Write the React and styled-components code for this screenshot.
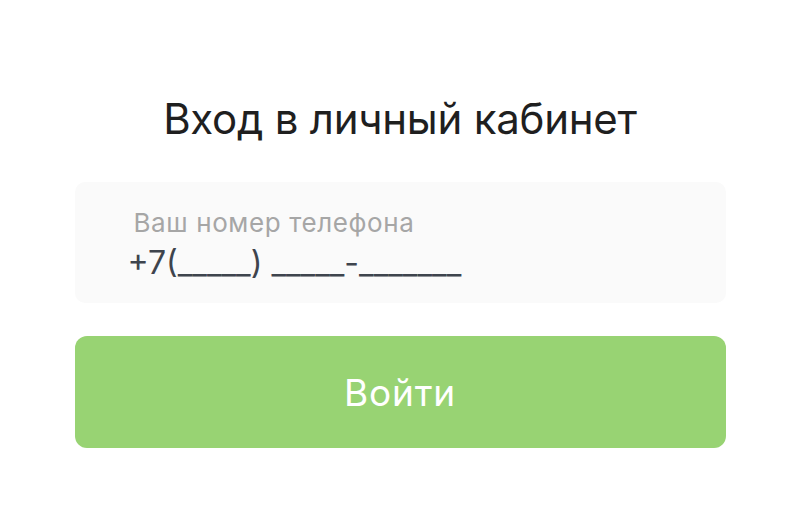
import React from "react";
import styled, { createGlobalStyle } from "styled-components";

const GlobalStyle = createGlobalStyle`
  html, body {
    margin: 0;
    padding: 0;
    background: #ffffff;
    font-family: Inter, "Noto Sans", sans-serif;
  }
`;

const Page = styled.div`
  width: 800px;
  height: 528px;
  display: flex;
  justify-content: center;
`;

const Form = styled.form`
  width: 651px;
  padding-top: 91px;
  display: flex;
  flex-direction: column;
`;

const Title = styled.h1`
  margin: 0 0 35px;
  text-align: center;
  font-size: 42px;
  font-weight: 400;
  line-height: 56px;
  letter-spacing: -0.25px;
  color: #1f1f1f;
`;

const Field = styled.label`
  height: 121px;
  box-sizing: border-box;
  padding: 25px 0 0 53px;
  background: #fafafa;
  border-radius: 10px;
  display: flex;
  flex-direction: column;
`;

const Caption = styled.span`
  margin-left: 6px;
  font-size: 26px;
  line-height: 32px;
  letter-spacing: 0.6px;
  color: #a6a6a6;
`;

const Phone = styled.input`
  margin-top: 4px;
  border: none;
  background: transparent;
  padding: 0;
  outline: none;
  font-family: inherit;
  font-size: 32px;
  line-height: 40px;
  height: 40px;
  color: #3e444d;
  &::placeholder {
    color: #3e444d;
    opacity: 1;
  }
`;

const Submit = styled.button`
  margin-top: 33px;
  height: 112px;
  border: none;
  border-radius: 12px;
  background: #98d373;
  color: #ffffff;
  font-family: inherit;
  font-size: 37px;
  letter-spacing: 0.8px;
  cursor: pointer;
`;

const App = () => {
  return (
    <Page>
      <GlobalStyle />
      <Form onSubmit={(e) => e.preventDefault()}>
        <Title>Вход в личный кабинет</Title>
        <Field>
          <Caption>Ваш номер телефона</Caption>
          <Phone type="tel" placeholder="+7(_____) _____-_______" />
        </Field>
        <Submit type="submit">Войти</Submit>
      </Form>
    </Page>
  );
};

export default App;
